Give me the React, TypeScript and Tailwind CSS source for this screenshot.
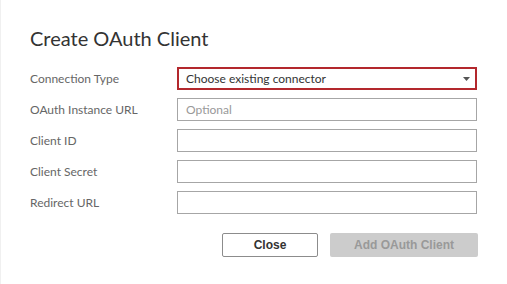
import * as React from 'react'

const fields = [
  { label: 'OAuth Instance URL', placeholder: 'Optional' },
  { label: 'Client ID', placeholder: '' },
  { label: 'Client Secret', placeholder: '' },
  { label: 'Redirect URL', placeholder: '' },
]

export default function App() {
  return (
    <div className="w-[507px] h-[284px] bg-white border-l border-[#f0f0f0] overflow-hidden" style={{ fontFamily: 'Lato, "Noto Sans", Arial, sans-serif' }}>
      <div className="pl-[29px] pt-[24px] w-[477px]">
        <h1 className="text-[20px] leading-[28px] text-[#333333] font-normal">Create OAuth Client</h1>

        <div className="mt-[15px] grid grid-cols-[147px_300px] gap-y-[8px]">
          <div className="h-[23px] flex items-center text-[12px] text-[#666666]">Connection Type</div>
          <div className="h-[23px] flex items-center justify-between border-2 border-[#b3282d] pl-[7px] pr-[5px] text-[12px] text-[#333333]">
            <span>Choose existing connector</span>
            <svg width="7" height="4" viewBox="0 0 7 4">
              <path d="M0 0H7L3.5 4Z" fill="#555555" />
            </svg>
          </div>

          {fields.map((f) => (
            <React.Fragment key={f.label}>
              <div className="h-[23px] flex items-center text-[12px] text-[#666666]">{f.label}</div>
              <div className="h-[23px] flex items-center border border-[#a6a6a6] px-[8px] text-[12px] text-[#999999]">
                {f.placeholder}
              </div>
            </React.Fragment>
          ))}
        </div>

        <div className="mt-[19px] flex justify-end gap-[12px]">
          <button
            type="button"
            className="w-[96px] h-[24px] border border-[#8c8c8c] rounded-[2px] bg-white text-[12px] font-bold text-[#333333]"
            style={{ fontFamily: '"Liberation Sans", Arial, sans-serif' }}
          >
            Close
          </button>
          <button
            type="button"
            className="w-[148px] h-[24px] rounded-[2px] bg-[#cccccc] text-[12px] font-bold text-[#999999]"
            style={{ fontFamily: '"Liberation Sans", Arial, sans-serif' }}
          >
            Add OAuth Client
          </button>
        </div>
      </div>
    </div>
  )
}
